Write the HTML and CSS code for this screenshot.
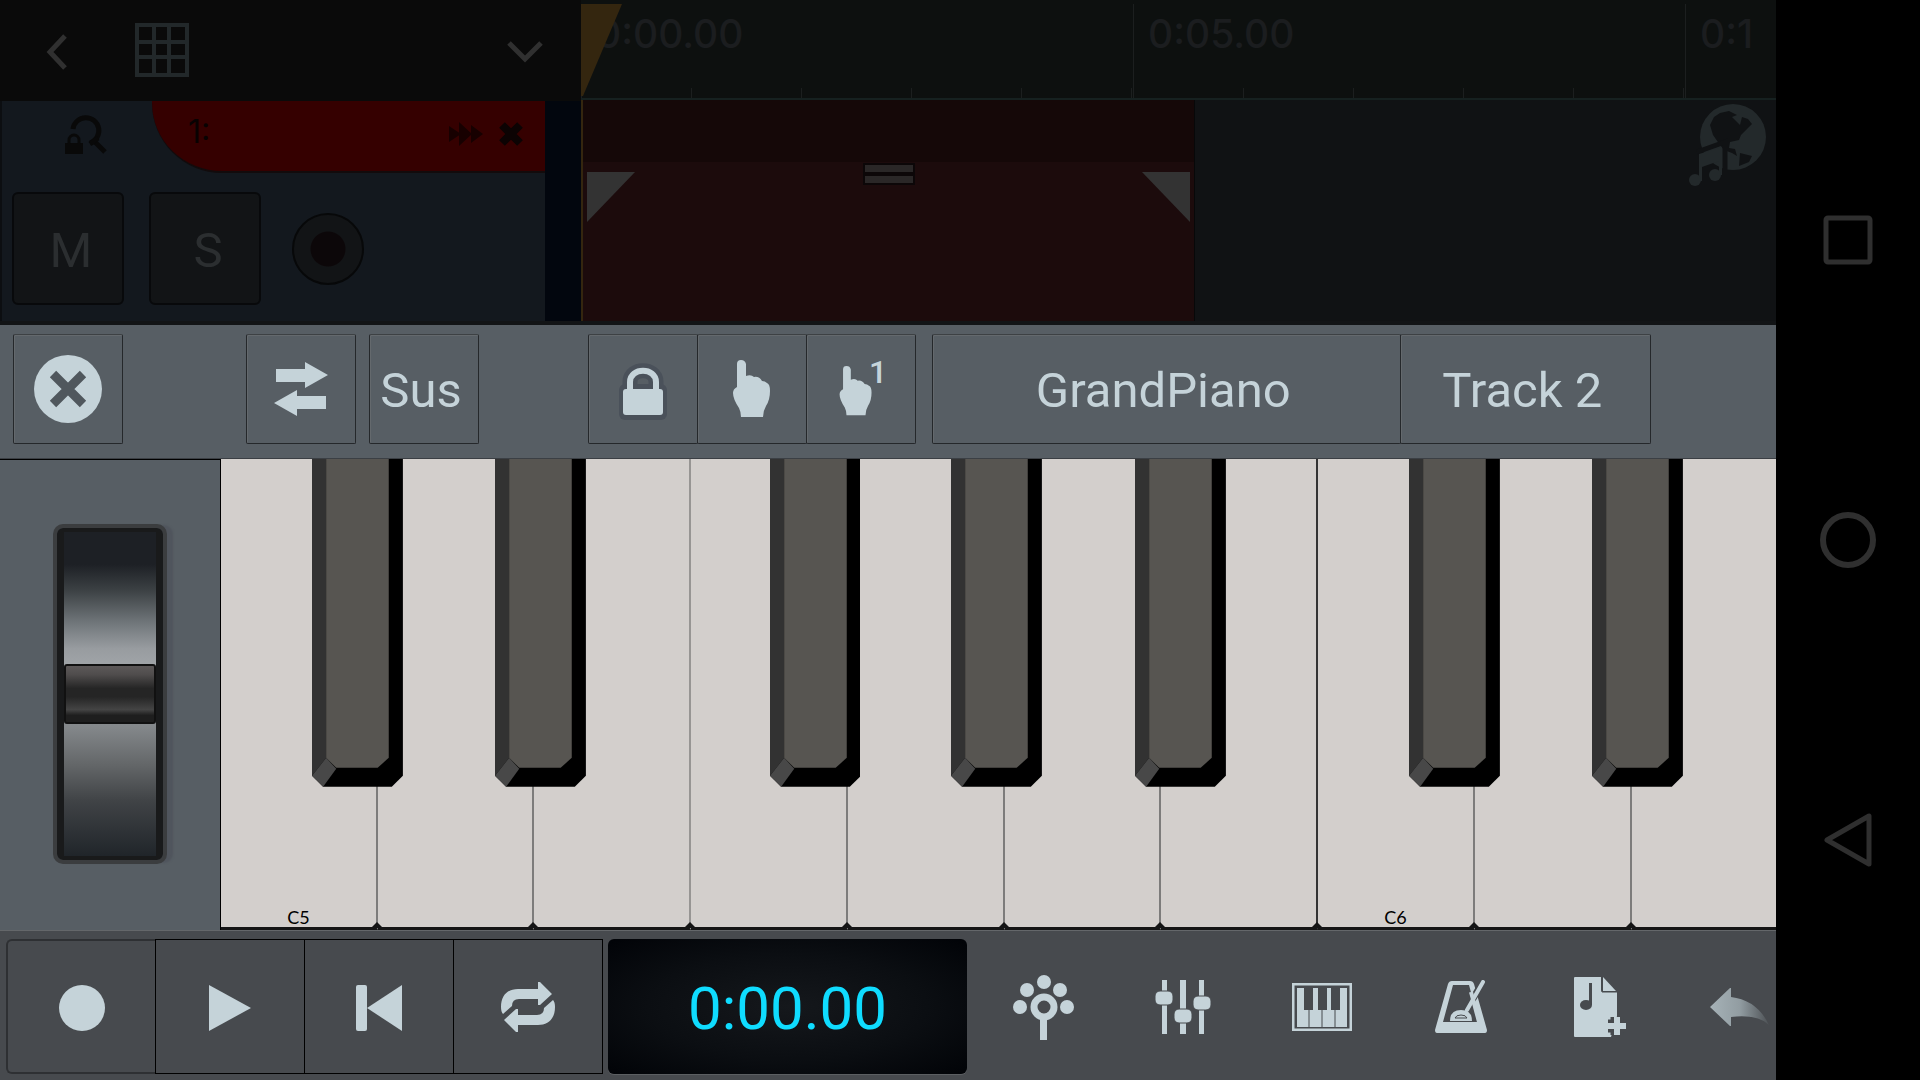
FILE: index.html
```html
<!DOCTYPE html>
<html lang="en">
<head>
	<meta charset="UTF-8">
	<meta name="viewport" content="width=device-width, initial-scale=1.0">
	<title>Audio Studio</title>
	<link rel="stylesheet" href="styles.css">
</head>
<body>
	<main class="app">
		<section class="arranger">
			<div class="panel">
				<div class="panel-top">
					<button class="back" aria-label="Back"><svg width="22" height="36" viewBox="0 0 22 36"><path d="M19 2L4 18l15 16" fill="none" stroke="#303030" stroke-width="5"/></svg></button>
					<button class="grid" aria-label="Grid"><svg width="54" height="54" viewBox="0 0 54 54"><path d="M2 2h50v50H2zM19 2v50M34 2v50M2 19h50M2 34h50" fill="none" stroke="#22282a" stroke-width="4"/></svg></button>
					<button class="expand" aria-label="Expand"><svg width="36" height="22" viewBox="0 0 36 22"><path d="M2 2l16 16L34 2" fill="none" stroke="#303030" stroke-width="5"/></svg></button>
				</div>
				<div class="track">
					<div class="track-head">
						<button class="find" aria-label="Zoom lock">
							<svg width="44" height="42" viewBox="0 0 44 42">
								<path d="M9 15a13 13 0 1 1 17 14M30 27l11 11" fill="none" stroke="#090909" stroke-width="5"/>
								<path d="M26 30l8-6" stroke="#090909" stroke-width="5"/>
								<rect x="1" y="29" width="18" height="11" fill="#090909"/>
								<path d="M5 30v-4a5 5 0 0 1 10 0v4" fill="none" stroke="#090909" stroke-width="3"/>
							</svg>
						</button>
						<div class="track-name">
							<span>1:</span>
							<svg width="34" height="26" viewBox="0 0 34 26" fill="#170000"><path d="M0 5l12 8-12 8zM10 1l13 12-13 12zM22 4l12 9-12 9z"/></svg>
							<button class="remove" aria-label="Remove track"><svg width="26" height="26" viewBox="0 0 26 26"><path d="M4 4l18 18M22 4L4 22" stroke="#0c0303" stroke-width="8"/></svg></button>
						</div>
					</div>
					<div class="track-buttons">
						<button class="square">M</button>
						<button class="square">S</button>
						<button class="arm" aria-label="Arm recording"></button>
					</div>
				</div>
			</div>
			<div class="timeline">
				<div class="ruler">
					<div class="mark">0:00.00</div>
					<div class="mark">0:05.00</div>
					<div class="mark">0:1</div>
					<svg class="playhead" width="42" height="93" viewBox="0 0 42 93"><path d="M0 0h41L2 92H0z" fill="#34260f"/></svg>
				</div>
				<div class="lane">
					<div class="clip">
						<div class="clip-top"></div>
						<div class="clip-body">
							<svg width="48" height="50" viewBox="0 0 48 50"><path d="M0 0h48L0 50z" fill="#333"/></svg>
							<div class="grip"></div>
							<svg width="48" height="50" viewBox="0 0 48 50"><path d="M0 0h48v50z" fill="#333"/></svg>
						</div>
					</div>
					<button class="globe" aria-label="Online sounds">
						<svg width="80" height="84" viewBox="0 0 80 84">
							<circle cx="46" cy="34" r="33" fill="#23292b"/>
							<path d="M23 22l4-8 6-4 9-2 8 4-5 2 4 4 4 4 2-8 6 2 4 5-4 4-7 7-2 5-9 2-1 6 6 1 2 7-5-3-8-3-4-5-7-10zM53 50l12 3-3 6-10 4z" fill="#101214"/>
							<path d="M10 49l28-10v33" fill="none" stroke="#101214" stroke-width="5"/>
							<path d="M12 51l23-7v28h-3V58l-17 6v14h-3z" fill="#23292b"/>
							<circle cx="28" cy="72" r="6" fill="#23292b"/>
							<circle cx="8" cy="77" r="6" fill="#23292b"/>
						</svg>
					</button>
				</div>
			</div>
		</section>

		<section class="toolbar">
			<button class="tool close" aria-label="Close"><svg width="70" height="70" viewBox="0 0 70 70"><circle cx="35" cy="35" r="34" fill="#c5d3d9"/><path d="M20 20l30 30M50 20L20 50" stroke="#50575d" stroke-width="9"/></svg></button>
			<button class="tool swap" aria-label="Swap"><svg width="56" height="56" viewBox="0 0 56 56" fill="#c5d3d9"><path d="M3 8h29V1l23 13-23 13v-6H3zM53 48H24v7L1 42l23-13v6h29z"/></svg></button>
			<button class="tool label sus">Sus</button>
			<div class="group">
				<button class="tool" aria-label="Lock">
					<svg width="54" height="62" viewBox="0 0 54 62">
						<rect x="3" y="26" width="48" height="36" rx="6" fill="#4a515a"/>
						<path d="M14 32v-8c0-15 26-15 26 0v8" fill="none" stroke="#4a515a" stroke-width="15"/>
						<path d="M14 32v-8c0-15 26-15 26 0v8" fill="none" stroke="#c5d3d9" stroke-width="6"/>
						<rect x="7" y="31" width="40" height="26" rx="3" fill="#c5d3d9"/>
					</svg>
				</button>
				<button class="tool" aria-label="Touch"><svg width="44" height="62" viewBox="0 0 44 62" fill="#c5d3d9"><path d="M7 6q0-4 4-4t5 4v12q5-2 8 1 5-1 8 4 3 0 5 2 3 1 3 8 0 9-4 15-3 5-3 11H11q0-5-2-9-6-9-6-15 0-4 4-6z"/></svg></button>
				<button class="tool single" aria-label="Single touch"><svg width="38" height="54" viewBox="0 0 44 62" fill="#c5d3d9"><path d="M7 6q0-4 4-4t5 4v12q5-2 8 1 5-1 8 4 3 0 5 2 3 1 3 8 0 9-4 15-3 5-3 11H11q0-5-2-9-6-9-6-15 0-4 4-6z"/></svg><sup>1</sup></button>
			</div>
			<div class="names">
				<button class="tool label">GrandPiano</button>
				<button class="tool label">Track 2</button>
			</div>
		</section>

		<section class="keyboard">
			<div class="pitch">
				<input type="range" min="0" max="100" value="50" aria-label="Pitch bend">
			</div>
			<ul class="keys" id="keys"></ul>
		</section>

		<footer class="transport">
			<div class="play-group">
				<button class="rec" aria-label="Record"><svg width="46" height="46" viewBox="0 0 46 46"><circle cx="23" cy="23" r="23" fill="#c5d3d9"/></svg></button>
				<button aria-label="Play"><svg width="42" height="46" viewBox="0 0 42 46"><path d="M0 0l42 23L0 46z" fill="#c5d3d9"/></svg></button>
				<button aria-label="Rewind"><svg width="46" height="46" viewBox="0 0 46 46" fill="#c5d3d9"><rect width="11" height="46" rx="2"/><path d="M11 23L46 0v46z"/></svg></button>
				<button aria-label="Loop">
					<svg width="56" height="53" viewBox="0 0 56 53" fill="#c5d3d9">
						<path id="loop" d="M3 33Q1 31 1 26C1 14 8 8 18 8h20V1h2l12 12-12 11h-2v-6H19q-7 0-7 7z"/>
						<use href="#loop" transform="rotate(180 28 26)"/>
					</svg>
				</button>
			</div>
			<output class="time">0:00.00</output>
			<nav class="tools">
				<button aria-label="Instruments">
					<svg width="64" height="68" viewBox="0 0 64 68" fill="#c5d3d9">
						<circle cx="32" cy="9" r="7"/><circle cx="15" cy="17" r="7"/><circle cx="48" cy="17" r="7"/><circle cx="8" cy="34" r="7"/><circle cx="55" cy="34" r="7"/>
						<circle cx="32" cy="34" r="10" fill="none" stroke="#c5d3d9" stroke-width="7"/>
						<path d="M28 46h7v21h-7z"/>
					</svg>
				</button>
				<button aria-label="Mixer">
					<svg width="56" height="56" viewBox="0 0 56 56" fill="#c5d3d9" stroke="#474a4e">
						<path d="M7 1h5v54H7zM25 1h6v54h-6zM44 1h5v54h-5z" stroke="none"/>
						<rect x="0" y="12" width="18" height="14" rx="5"/><rect x="19" y="30" width="18" height="14" rx="5"/><rect x="38" y="17" width="18" height="14" rx="5"/>
					</svg>
				</button>
				<button aria-label="Keyboard">
					<svg width="60" height="48" viewBox="0 0 60 48">
						<path d="M1 1h58v46H1z" fill="none" stroke="#c5d3d9" stroke-width="3"/>
						<path d="M5 5h50v39H5z" fill="#c5d3d9"/>
						<path d="M12 4h9v23h-9zM26 4h9v23h-9zM39 4h9v23h-9z" fill="#474a4e"/>
						<path d="M17 27v17M30 27v17M43 27v17" stroke="#474a4e" stroke-width="1"/>
					</svg>
				</button>
				<button aria-label="Metronome">
					<svg width="52" height="54" viewBox="0 0 52 54">
						<path d="M17 1h18q3 0 4 3l13 46q0 3-2 3H2q-2 0-2-3L13 4q1-3 4-3zm1 4L8 42h36L34 5z" fill="#c5d3d9" fill-rule="evenodd"/>
						<path d="M48 2L31 30" stroke="#474a4e" stroke-width="7"/>
						<path d="M36 12l8 30" stroke="#c5d3d9" stroke-width="4"/>
						<path d="M48 2L32 30" stroke="#c5d3d9" stroke-width="4" stroke-linecap="round"/>
						<path d="M15 41q0-11 11-11t11 11z" fill="#c5d3d9"/>
						<path d="M20 38q1-3 6-3t6 3z" fill="none" stroke="#474a4e" stroke-width="1"/>
					</svg>
				</button>
				<button aria-label="Add clip">
					<svg width="52" height="62" viewBox="1 0 52 62">
						<path d="M2 1h26v13q0 2 2 2h14v24l-6 21H2q-1 0-1-1V2q0-1 1-1z" fill="#c5d3d9"/>
						<path d="M30 1l13 14H30z" fill="#c5d3d9"/>
						<path d="M29 1v15h15" fill="none" stroke="#474a4e" stroke-width="1"/>
						<path d="M16 7h3v22h-3z" fill="#474a4e"/><ellipse cx="13" cy="29" rx="6" ry="5" fill="#474a4e"/>
						<path d="M44 41v18M35 50h18" stroke="#474a4e" stroke-width="13" stroke-linejoin="round"/>
						<path d="M44 41v18M35 50h18" stroke="#c5d3d9" stroke-width="6"/>
					</svg>
				</button>
				<button aria-label="Undo">
					<svg width="60" height="40" viewBox="0 0 60 40">
						<linearGradient id="fade"><stop stop-color="#a6b2b7"/><stop offset=".5" stop-color="#929da2"/><stop offset="1" stop-color="#4d5155"/></linearGradient>
						<path d="M1 20L21 1h1v9q26 3 38 28-11-11-38-8v9h-1z" fill="url(#fade)"/>
					</svg>
				</button>
			</nav>
		</footer>
	</main>

	<aside class="system">
		<button aria-label="Recent apps"><svg width="50" height="50" viewBox="0 0 50 50"><rect x="3" y="3" width="44" height="44" rx="2" fill="none" stroke="#2f2f2f" stroke-width="5"/></svg></button>
		<button aria-label="Home"><svg width="56" height="56" viewBox="0 0 56 56"><circle cx="28" cy="28" r="25" fill="none" stroke="#2f2f2f" stroke-width="6"/></svg></button>
		<button aria-label="Back"><svg width="50" height="58" viewBox="0 0 50 58"><path d="M46 5v48L4 29z" fill="none" stroke="#2f2f2f" stroke-width="5" stroke-linejoin="round"/></svg></button>
	</aside>

	<script>
		const keys = document.getElementById('keys');
		const notes = ['C5', 'D5', 'E5', 'F5', 'G5', 'A5', 'B5', 'C6', 'D6', 'E6'];
		const sharps = 'CDFGA';

		const blackKey = `<svg viewBox="0 0 90 328" preserveAspectRatio="none">
			<path d="M0 0h90v317l-11 11H11L0 317z" fill="#000"/>
			<path d="M0 0h14v299L0 317z" fill="#323232"/>
			<path d="M14 299l10 11-13 18L0 317z" fill="#484848"/>
			<path d="M14 0h62v299l-11 10H24l-10-10z" fill="#575551"/>
		</svg>`;

		notes.forEach((note) => {
			const name = note[0];
			const key = document.createElement('li');
			key.className = `key key-${name.toLowerCase()}`;
			key.innerHTML = `<button class="white" aria-label="${note}">${name === 'C' ? note : ''}</button>`;
			if (sharps.includes(name)) {
				key.innerHTML += `<button class="black" aria-label="${name}#${note[1]}">${blackKey}</button>`;
			}
			keys.appendChild(key);
		});
	</script>
</body>
</html>
```
FILE: styles.css
```css
* {
	box-sizing: border-box;
}
body {
	display: flex;
	height: 100vh;
	margin: 0;
	background: #000;
	font-family: Roboto, "Liberation Sans", sans-serif;
	overflow: hidden;
}
button {
	display: flex;
	align-items: center;
	justify-content: center;
	margin: 0;
	padding: 0;
	border: 0;
	background: none;
	color: inherit;
	font: inherit;
}
svg {
	display: block;
	flex: none;
}
.app {
	flex: 1;
	min-width: 0;
	display: flex;
	flex-direction: column;
	overflow: hidden;
}

/* arranger */
.arranger {
	flex: none;
	display: flex;
	height: 325px;
	border-bottom: 4px solid #121416;
}
.panel {
	flex: none;
	width: 581px;
	display: flex;
	flex-direction: column;
	background: #0a0a0a;
}
.panel-top {
	flex: none;
	display: flex;
	align-items: center;
	height: 101px;
	padding: 2px 38px 0 46px;
}
.grid {
	margin: 0 auto 4px 67px;
}
.track {
	flex: 1;
	background: #13181e;
	border-left: 2px solid #0c0e11;
	border-right: 36px solid #02060e;
}
.track-head {
	display: flex;
	height: 72px;
}
.find {
	width: 150px;
	padding: 0 0 4px 18px;
}
.track-name {
	flex: 1;
	display: flex;
	align-items: center;
	padding: 0 21px 8px 36px;
	background: #350000;
	border-bottom: 2px solid #120b0c;
	border-bottom-left-radius: 70px;
	font: 32px/36px Inter, sans-serif;
	color: #080202;
}
.track-name svg {
	margin-top: 4px;
}
.track-name span {
	margin-right: auto;
}
.remove {
	margin-left: 15px;
}
.track-buttons {
	display: flex;
	align-items: center;
	gap: 25px;
	padding: 19px 10px 0;
}
.square {
	width: 112px;
	height: 113px;
	padding: 4px 0 0 6px;
	border: 2px solid #08090b;
	border-radius: 6px;
	background: #121416;
	color: #2b2e30;
	font-size: 49px;
	line-height: 56px;
}
.arm {
	width: 72px;
	height: 72px;
	margin-left: 6px;
	border: 2px solid #070809;
	border-radius: 50%;
	background: radial-gradient(circle, #0c0709 17px, #121416 18px);
}
.timeline {
	flex: 1;
	min-width: 0;
	display: flex;
	flex-direction: column;
	background: #101214;
}
.ruler {
	flex: none;
	position: relative;
	display: flex;
	height: 100px;
	padding-top: 4px;
	background: #0d100f;
	border-bottom: 2px solid #162120;
	overflow: hidden;
}
.mark {
	flex: none;
	width: 552px;
	padding: 7px 14px;
	border-left: 1px solid #1c1f1f;
	background: repeating-linear-gradient(90deg, transparent 0 109px, #1c1f1f 109px 110px) left bottom / 100% 10px no-repeat;
	color: #1b1d1f;
	font: 500 39px/46px Inter, sans-serif;
}
.playhead {
	position: absolute;
	top: 4px;
	left: 0;
}
.lane {
	flex: 1;
	display: flex;
	justify-content: space-between;
}
.clip {
	width: 614px;
	display: flex;
	flex-direction: column;
	border-left: 2px solid #34260f;
	border-right: 1px solid #070809;
	background: #1c0b0c;
}
.clip-top {
	height: 62px;
	background: #150808;
}
.clip-body {
	flex: 1;
	display: flex;
	align-items: flex-start;
	justify-content: space-between;
	padding: 10px 4px 0;
}
.grip {
	width: 52px;
	height: 22px;
	margin-top: -9px;
	border: 2px solid #0c0708;
	background: linear-gradient(#2a2727 7px, #0c0708 7px 11px, #2a2727 11px);
}
.globe {
	align-self: flex-start;
	margin: 3px 9px;
}

/* keyboard toolbar */
.toolbar {
	flex: none;
	display: flex;
	height: 134px;
	padding: 9px 13px;
	background: #575e64;
	border-bottom: 1px solid #3b3f44;
	color: #c5d3d9;
	font-size: 49px;
	line-height: 56px;
}
.tool {
	flex: none;
	width: 110px;
	height: 110px;
	border: 1px solid #25282b;
	border-top-color: #3d4144;
	border-radius: 2px;
	box-shadow: inset 1px 1px #64696d;
}
.label {
	padding: 3px 6px 0 0;
}
.swap {
	margin-left: 123px;
}
.sus {
	margin-left: 13px;
}
.group, .names {
	display: flex;
}
.group {
	margin-left: 109px;
}
.group .tool + .tool, .names .tool + .tool {
	margin-left: -1px;
}
.single {
	position: relative;
	padding: 4px 10px 0 0;
}
.single sup {
	position: absolute;
	top: 19px;
	left: 62px;
	font-size: 32px;
	font-weight: 500;
	line-height: 36px;
}
.names {
	flex: 1;
	margin: 0 112px 0 16px;
}
.names .tool {
	flex: 471 1 0;
}
.names .tool + .tool {
	flex-grow: 249;
}

/* keys */
.keyboard {
	flex: 1;
	min-height: 0;
	display: flex;
}
.pitch {
	flex: none;
	width: 221px;
	display: flex;
	align-items: center;
	justify-content: center;
	padding-bottom: 3px;
	background: #575e64;
	border-top: 1px solid #000;
	border-right: 1px solid #000;
}
.pitch input {
	appearance: none;
	writing-mode: vertical-lr;
	direction: rtl;
	width: 106px;
	height: 332px;
	margin: 0;
	padding: 0;
	border: solid #191a1b;
	border-width: 4px 7px;
	border-radius: 6px;
	background: linear-gradient(#1d2025 0 10%, #3c4144 18%, #70767a 28%, #989ca0 36%, #a0a4a7 41%, #84888b 60%, #636668 72%, #404346 83%, #20252a);
	box-shadow: 0 0 0 4px #3b3d3f, 7px 0 2px 3px #50555d;
}
.pitch input::-webkit-slider-thumb {
	appearance: none;
	width: 92px;
	height: 60px;
	border: 2px solid #111;
	border-radius: 3px;
	background: linear-gradient(#5c5858, #504d4d 15%, #252525 40%, #252525 55%, #444 78%, #1e1e1e 88%);
}
.keys {
	flex: 1;
	min-width: 0;
	display: flex;
	margin: 0;
	padding: 0;
	list-style: none;
	overflow: hidden;
	background: #151515;
}
.key {
	position: relative;
	flex: 0 0 10.08%;
}
.white {
	width: 100%;
	height: 100%;
	align-items: flex-end;
	border-right: 2px solid #7d7c7b;
	border-bottom: 3px solid #151515;
	background: #d3cfcc;
	color: #000;
	font: 18px/20px Lato, sans-serif;
}
.key-e .white {
	border-right-color: #979593;
}
.key-b .white {
	border-right-color: #333;
}
/* dark notch where two keys meet */
.key::after {
	content: "";
	position: absolute;
	right: -5px;
	bottom: 2px;
	z-index: 1;
	border: 6px solid transparent;
	border-top: 0;
	border-bottom-color: #151515;
}
.black {
	position: absolute;
	top: 0;
	z-index: 2;
	width: 58%;
	height: 69.6%;
}
.black svg {
	width: 100%;
	height: 100%;
}
.key-c .black {
	left: 58%;
}
.key-d .black {
	left: 75%;
}
.key-f .black {
	left: 50%;
}
.key-g .black {
	left: 66%;
}
.key-a .black {
	left: 83%;
}

/* transport bar */
.transport {
	flex: none;
	display: flex;
	height: 150px;
	padding: 8px 0 6px 6px;
	background: #474a4e;
	border-top: 1px solid #64676a;
}
.play-group {
	flex: none;
	display: flex;
}
.play-group button {
	width: 150px;
	padding-top: 2px;
	border: 1px solid #000;
}
.play-group button + button {
	margin-left: -1px;
}
.play-group .rec {
	border: 2px solid #2e3033;
	border-right: 1px solid #000;
	border-radius: 6px 0 0 6px;
}
.time {
	flex: none;
	display: flex;
	align-items: center;
	justify-content: center;
	width: 359px;
	margin-left: 5px;
	padding-top: 5px;
	border-radius: 6px;
	background: radial-gradient(#15181c, #0b0e12 55%, #010307);
	box-shadow: 0 1px #5c5f62;
	color: #0fdcff;
	font-size: 60px;
	line-height: 70px;
}
.tools {
	flex: 1;
	min-width: 0;
	display: flex;
	margin-left: 7px;
	overflow: hidden;
}
.tools button {
	flex: none;
	width: 139px;
}

/* system navigation */
.system {
	flex: none;
	width: 144px;
	display: flex;
	flex-direction: column;
	padding: 90px 0;
}
.system button {
	flex: 1;
}
```
